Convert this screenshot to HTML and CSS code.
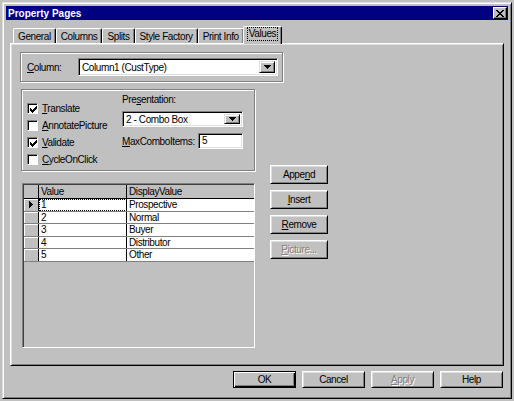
FILE: index.html
```html
<!DOCTYPE html>
<html lang="en">
<head>
  <meta charset="UTF-8">
  <title>Property Pages</title>
  <link rel="stylesheet" href="styles.css">
</head>
<body>

  <div class="window">
    <div class="titlebar">
      <span class="title">Property Pages</span>
      <span class="close-btn">
        <svg width="8" height="7" viewBox="0 0 8 7"><path d="M0 0h2v1h1v1h2v-1h1v-1h2v1h-1v1h-1v1h-1v1h1v1h1v1h1v1h-2v-1h-1v-1h-2v1h-1v1h-2v-1h1v-1h1v-1h1v-1h-1v-1h-1v-1h-1z" fill="#000"/></svg>
      </span>
    </div>

    <div class="tabs">
      <div class="tab">General</div>
      <div class="tab">Columns</div>
      <div class="tab">Splits</div>
      <div class="tab">Style Factory</div>
      <div class="tab">Print Info</div>
      <div class="tab active"><span class="focus">Values</span></div>
    </div>

    <div class="panel">
      <div class="group column-group">
        <span class="column-label"><u>C</u>olumn:</span>
        <div class="combo combo-column">
          <span class="combo-text">Column1 (CustType)</span>
          <span class="drop-btn">
            <svg width="7" height="4" viewBox="0 0 7 4"><path d="M0 0h7v1h-1v1h-1v1h-1v1h-1v-1h-1v-1h-1v-1h-1z" fill="#000"/></svg>
          </span>
        </div>
      </div>

      <div class="main">
        <div class="left">
          <div class="group options">
            <div class="checks">
              <div class="check-row">
                <span class="checkbox"><svg width="7" height="7" viewBox="0 0 7 7"><path d="M0 2h1v3h-1zM1 3h1v3h-1zM2 4h1v3h-1zM3 3h1v3h-1zM4 2h1v3h-1zM5 1h1v3h-1zM6 0h1v3h-1z" fill="#000"/></svg></span>
                <span><u>T</u>ranslate</span>
              </div>
              <div class="check-row">
                <span class="checkbox"></span>
                <span><u>A</u>nnotatePicture</span>
              </div>
              <div class="check-row">
                <span class="checkbox"><svg width="7" height="7" viewBox="0 0 7 7"><path d="M0 2h1v3h-1zM1 3h1v3h-1zM2 4h1v3h-1zM3 3h1v3h-1zM4 2h1v3h-1zM5 1h1v3h-1zM6 0h1v3h-1z" fill="#000"/></svg></span>
                <span><u>V</u>alidate</span>
              </div>
              <div class="check-row">
                <span class="checkbox"></span>
                <span><u>C</u>ycleOnClick</span>
              </div>
            </div>

            <div class="presentation">
              <div class="pres-label">Pre<u>s</u>entation:</div>
              <div class="combo combo-pres">
                <span class="combo-text">2 - Combo Box</span>
                <span class="drop-btn">
                  <svg width="7" height="4" viewBox="0 0 7 4"><path d="M0 0h7v1h-1v1h-1v1h-1v1h-1v-1h-1v-1h-1v-1h-1z" fill="#000"/></svg>
                </span>
              </div>
              <div class="max-row">
                <span class="max-label"><u>M</u>axComboItems:</span>
                <span class="textbox">5</span>
              </div>
            </div>
          </div>

          <div class="grid">
            <div class="grid-row grid-head">
              <div class="sel"></div>
              <div class="cell">Value</div>
              <div class="cell">DisplayValue</div>
            </div>
            <div class="grid-row">
              <div class="sel">
                <svg width="4" height="7" viewBox="0 0 4 7"><path d="M0 0h1v1h1v1h1v1h1v1h-1v1h-1v1h-1v1h-1z" fill="#000"/></svg>
              </div>
              <div class="cell current">1</div>
              <div class="cell">Prospective</div>
            </div>
            <div class="grid-row">
              <div class="sel"></div>
              <div class="cell">2</div>
              <div class="cell">Normal</div>
            </div>
            <div class="grid-row">
              <div class="sel"></div>
              <div class="cell">3</div>
              <div class="cell">Buyer</div>
            </div>
            <div class="grid-row">
              <div class="sel"></div>
              <div class="cell">4</div>
              <div class="cell">Distributor</div>
            </div>
            <div class="grid-row">
              <div class="sel"></div>
              <div class="cell">5</div>
              <div class="cell">Other</div>
            </div>
          </div>
        </div>

        <div class="side-buttons">
          <button class="btn side">Appe<u>n</u>d</button>
          <button class="btn side"><u>I</u>nsert</button>
          <button class="btn side"><u>R</u>emove</button>
          <button class="btn side disabled"><u>P</u>icture...</button>
        </div>
      </div>
    </div>

    <div class="footer">
      <button class="btn foot default">OK</button>
      <button class="btn foot">Cancel</button>
      <button class="btn foot disabled"><u>A</u>pply</button>
      <button class="btn foot">Help</button>
    </div>
  </div>

</body>
</html>
```

FILE: styles.css
```css
body {
  margin: 0;
  background: #c0c0c0;
  font-family: "Liberation Sans", Arial, sans-serif;
  font-size: 10px;
  letter-spacing: -0.4px;
  color: #000;
}

u {
  text-decoration: underline;
  text-underline-offset: 1px;
}

.window {
  box-sizing: border-box;
  width: 510px;
  height: 397px;
  margin: 2px 0 0 2px;
  padding: 3px;
  border: 1px solid;
  border-color: #dfdfdf #000 #000 #dfdfdf;
  box-shadow: inset 1px 1px #fff, inset -1px -1px #808080;
  display: flex;
  flex-direction: column;
}

/* title bar */
.titlebar {
  height: 14px;
  background: #000080;
  display: flex;
  align-items: center;
  justify-content: space-between;
  padding: 0 1px 0 2px;
}

.title {
  color: #fff;
  font-weight: bold;
  letter-spacing: 0;
}

.close-btn {
  box-sizing: border-box;
  width: 14px;
  height: 12px;
  background: #c0c0c0;
  border: 1px solid;
  border-color: #fff #000 #000 #fff;
  box-shadow: inset -1px -1px #808080;
  display: flex;
  align-items: center;
  justify-content: center;
}

/* tabs */
.tabs {
  height: 23px;
  padding-left: 7px;
  display: flex;
  align-items: flex-end;
}

.tab {
  box-sizing: border-box;
  height: 15px;
  padding: 0 4px;
  border: 1px solid;
  border-bottom: none;
  border-color: #fff #000 transparent #fff;
  border-radius: 2px 2px 0 0;
  box-shadow: inset -1px 0 #808080;
  display: flex;
  align-items: center;
}

.tab.active {
  position: relative;
  height: 18px;
  margin-bottom: -1px;
  margin-left: -1px;
  padding: 1px 4px 0;
  background: #c0c0c0;
  align-items: flex-start;
}

.focus {
  outline: 1px dotted #000;
  padding: 0 1px;
  line-height: 12px;
}

/* panel */
.panel {
  box-sizing: border-box;
  height: 323px;
  margin: 0 4px;
  padding: 8px 9px;
  border: 1px solid;
  border-color: #fff #000 #000 #fff;
  box-shadow: inset 1px 1px #dfdfdf, inset -1px -1px #808080;
}

.group {
  box-sizing: border-box;
  border: 1px solid #808080;
  box-shadow: inset 1px 1px #fff, 1px 1px #fff;
}

.column-group {
  width: 263px;
  height: 30px;
  padding-left: 6px;
  display: flex;
  align-items: center;
}

.column-label {
  width: 51px;
}

/* combo & text fields */
.combo,
.textbox {
  box-sizing: border-box;
  background: #fff;
  border: 1px solid;
  border-color: #808080 #fff #fff #808080;
  box-shadow: inset 1px 1px #000, inset -1px -1px #dfdfdf;
}

.combo {
  display: flex;
  align-items: center;
  padding: 2px;
}

.combo-column {
  width: 200px;
  height: 18px;
}

.combo-pres {
  width: 121px;
  height: 16px;
  margin-top: 5px;
}

.combo-text {
  flex: 1;
  padding-left: 1px;
}

.drop-btn {
  box-sizing: border-box;
  width: 16px;
  height: 100%;
  background: #c0c0c0;
  border: 1px solid;
  border-color: #dfdfdf #000 #000 #dfdfdf;
  box-shadow: inset 1px 1px #fff, inset -1px -1px #808080;
  display: flex;
  align-items: center;
  justify-content: center;
}

.textbox {
  width: 45px;
  height: 16px;
  padding: 0 3px;
  line-height: 14px;
}

/* options group */
.main {
  margin-top: 7px;
  display: flex;
}

.left {
  width: 234px;
  margin-left: 1px;
}

.options {
  height: 82px;
  padding-left: 5px;
  display: flex;
}

.checks {
  width: 95px;
  padding-top: 10px;
}

.check-row {
  height: 17px;
  display: flex;
  align-items: center;
  gap: 4px;
}

.checkbox {
  box-sizing: border-box;
  width: 11px;
  height: 11px;
  background: #fff;
  border: 1px solid;
  border-color: #808080 #fff #fff #808080;
  box-shadow: inset 1px 1px #000;
  display: flex;
  align-items: center;
  justify-content: center;
  padding: 1px 0 0 1px;
}

.presentation {
  padding-top: 4px;
}

.pres-label {
  line-height: 12px;
}

.max-row {
  margin-top: 6px;
  display: flex;
  align-items: center;
}

.max-label {
  width: 76px;
}

/* values grid */
.grid {
  box-sizing: border-box;
  width: 233px;
  height: 165px;
  margin: 12px 0 0 1px;
  border: 1px solid;
  border-color: #808080 #fff #fff #808080;
  box-shadow: inset 1px 1px #404040;
  padding: 1px 0 0 1px;
}

.grid-row {
  box-sizing: border-box;
  height: 12.5px;
  display: grid;
  grid-template-columns: 15px 88px 1fr;
  background: #fff;
  border-bottom: 1px solid #808080;
}

.grid-head {
  height: 14px;
  background: #c0c0c0;
  border-bottom-color: #000;
}

.cell {
  border-right: 1px solid #000;
  padding-left: 2px;
  line-height: 11px;
  white-space: nowrap;
}

.grid-row .cell:last-child {
  border-right: none;
}

.grid-head .cell {
  line-height: 13px;
}

.current {
  outline: 1px dotted #000;
  outline-offset: -1px;
}

.sel {
  background: #c0c0c0;
  border-right: 1px solid #000;
  box-shadow: inset 1px 1px #fff;
  display: flex;
  align-items: center;
  justify-content: center;
}

.grid-head .sel {
  box-shadow: none;
}

/* buttons */
.btn {
  box-sizing: border-box;
  background: #c0c0c0;
  font: inherit;
  letter-spacing: inherit;
  color: #000;
  padding: 0;
  border: 1px solid;
  border-color: #fff #000 #000 #fff;
  box-shadow: inset 1px 1px #dfdfdf, inset -1px -1px #808080;
}

.btn.disabled {
  color: #808080;
  text-shadow: 1px 1px #fff;
}

.side-buttons {
  margin-left: 15px;
  padding-top: 76px;
  display: flex;
  flex-direction: column;
  gap: 6px;
}

.side {
  width: 58px;
  height: 19px;
}

.footer {
  margin-top: 5px;
  padding-right: 5px;
  display: flex;
  justify-content: flex-end;
  gap: 6px;
}

.foot {
  width: 63px;
  height: 17px;
}

.btn.default {
  border-color: #000;
  box-shadow: inset 1px 1px #fff, inset -1px -1px #000, inset -2px -2px #808080;
}
```
